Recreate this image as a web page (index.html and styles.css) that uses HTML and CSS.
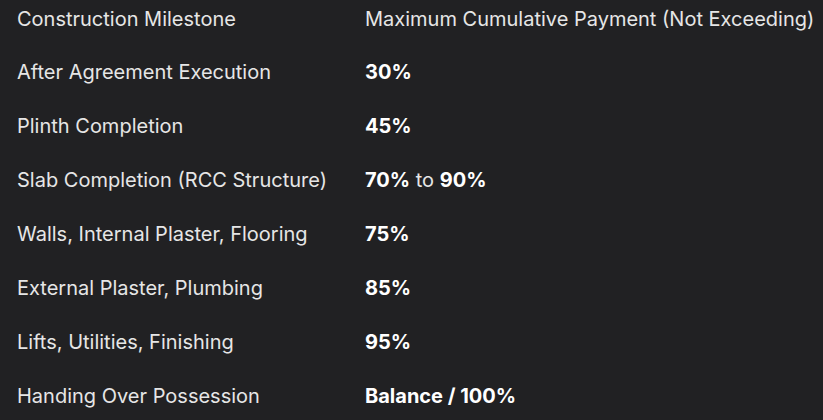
FILE: index.html
```html
<!DOCTYPE html>
<html lang="en">
<head>
<meta charset="utf-8">
<title>Payment Schedule</title>
<link rel="stylesheet" href="styles.css">
</head>
<body>
<table class="schedule">
  <thead>
    <tr>
      <th class="milestone">Construction Milestone</th>
      <th class="payment">Maximum Cumulative Payment (Not Exceeding)</th>
    </tr>
  </thead>
  <tbody>
    <tr><td class="milestone">After Agreement Execution</td><td class="payment"><b>30%</b></td></tr>
    <tr><td class="milestone">Plinth Completion</td><td class="payment"><b>45%</b></td></tr>
    <tr><td class="milestone">Slab Completion (RCC Structure)</td><td class="payment"><b>70%</b> to <b>90%</b></td></tr>
    <tr><td class="milestone">Walls, Internal Plaster, Flooring</td><td class="payment"><b>75%</b></td></tr>
    <tr><td class="milestone">External Plaster, Plumbing</td><td class="payment"><b>85%</b></td></tr>
    <tr><td class="milestone">Lifts, Utilities, Finishing</td><td class="payment"><b>95%</b></td></tr>
    <tr><td class="milestone">Handing Over Possession</td><td class="payment"><b>Balance / 100%</b></td></tr>
  </tbody>
</table>
</body>
</html>
```

FILE: styles.css
```css
html, body {
  margin: 0;
  padding: 0;
  background: #212123;
}
body {
  font-family: "Inter", "Roboto", sans-serif;
  color: #e6e6e6;
  overflow: hidden;
}
.schedule {
  border-collapse: collapse;
  border-spacing: 0;
}
.schedule th,
.schedule td {
  font-size: 20px;
  font-weight: 400;
  line-height: 24px;
  padding: 15px 0;
  text-align: left;
  white-space: nowrap;
  vertical-align: middle;
}
.schedule thead th {
  padding-top: 7px;
  padding-bottom: 14px;
}
.milestone {
  padding-left: 17px !important;
  width: 348px;
}
.schedule b {
  font-weight: 700;
  color: #ffffff;
}
```
